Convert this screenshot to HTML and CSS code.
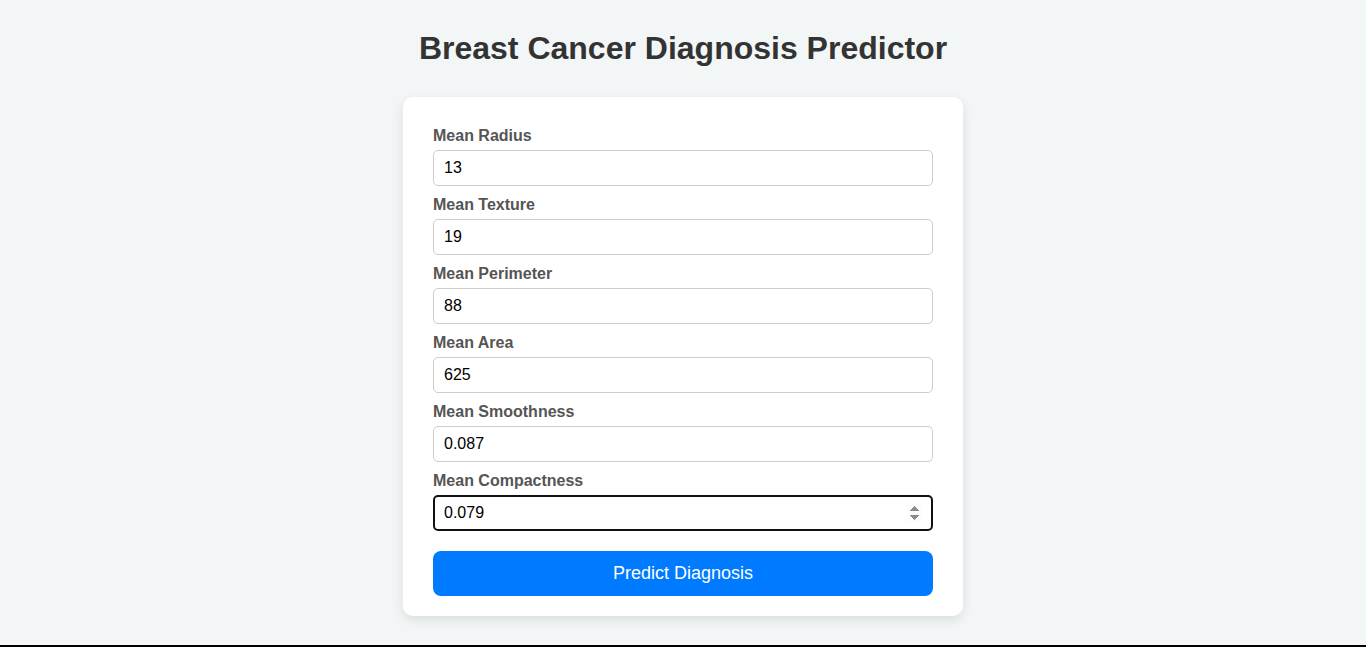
FILE: index.html
```html
<!DOCTYPE html>
<html lang="en">
<head>
<meta charset="utf-8">
<title>Breast Cancer Diagnosis Predictor</title>
<link rel="stylesheet" href="styles.css">
</head>
<body>
<div class="page">
  <h1 class="title">Breast Cancer Diagnosis Predictor</h1>
  <form class="card">
    <label class="label" for="r">Mean Radius</label>
    <input class="field" id="r" type="number" value="13">
    <label class="label" for="t">Mean Texture</label>
    <input class="field" id="t" type="number" value="19">
    <label class="label" for="p">Mean Perimeter</label>
    <input class="field" id="p" type="number" value="88">
    <label class="label" for="a">Mean Area</label>
    <input class="field" id="a" type="number" value="625">
    <label class="label" for="s">Mean Smoothness</label>
    <input class="field" id="s" type="number" value="0.087">
    <label class="label" for="c">Mean Compactness</label>
    <input class="field field-active" id="c" type="number" value="0.079" autofocus>
    <button class="btn" type="button">Predict Diagnosis</button>
  </form>
</div>
</body>
</html>
```
FILE: styles.css
```css
html, body {
  margin: 0;
  padding: 0;
}
body {
  background: #f3f6f7;
  font-family: "Liberation Sans", Arial, sans-serif;
}
.page {
  box-sizing: border-box;
  height: 647px;
  border-bottom: 2px solid #000;
  display: flex;
  flex-direction: column;
  align-items: center;
  overflow: hidden;
}
.title {
  margin: 30px 0 30px;
  font-size: 32px;
  line-height: 37px;
  font-weight: bold;
  color: #333;
}
.card {
  box-sizing: border-box;
  width: 560px;
  background: #fff;
  border-radius: 10px;
  padding: 30px 30px 20px;
  box-shadow: 0 4px 12px rgba(0, 0, 0, 0.1);
  display: flex;
  flex-direction: column;
}
.label {
  font-size: 16px;
  line-height: 18px;
  font-weight: bold;
  color: #555;
  margin-bottom: 5px;
}
.field {
  box-sizing: border-box;
  height: 36px;
  margin-bottom: 10px;
  padding: 0 10px;
  border: 1px solid #ccc;
  border-radius: 5px;
  font-family: "Liberation Sans", Arial, sans-serif;
  font-size: 16px;
  color: #000;
  outline: none;
}
.field-active {
  border: 2px solid #111;
  padding: 0 9px;
}
.btn {
  margin-top: 10px;
  height: 45px;
  border: none;
  border-radius: 8px;
  background: #007bff;
  color: #fff;
  font-family: "Liberation Sans", Arial, sans-serif;
  font-size: 18px;
}
```
